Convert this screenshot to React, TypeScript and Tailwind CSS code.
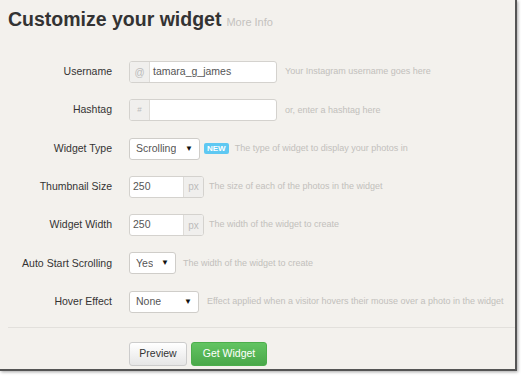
import { ReactNode } from 'react';

function Row({ label, children, help, helpGap = 'ml-2' }: { label: string; children: ReactNode; help: string; helpGap?: string }) {
  return (
    <div className="flex items-center h-[22px]">
      <div className="w-[112px] shrink-0 text-right text-[10.5px] text-[#333] whitespace-nowrap">{label}</div>
      <div className="ml-[17px] shrink-0 flex items-center">{children}</div>
      <div className={`${helpGap} text-[9px] text-[#c2c0bc] whitespace-nowrap`}>{help}</div>
    </div>
  );
}

function Select({ value, width }: { value: string; width: string }) {
  return (
    <div className={`${width} h-[22px] flex items-center justify-between bg-white border border-[#cfcdc9] rounded-[3px] pl-[6px] pr-[6px] text-[10.5px] text-[#555] overflow-hidden`}>
      <span className="whitespace-nowrap overflow-hidden">{value}</span>
      <span className="text-[8px] text-[#111] ml-1 shrink-0">▼</span>
    </div>
  );
}

function Addon({ children, side }: { children: ReactNode; side: 'left' | 'right' }) {
  return (
    <div
      className={`w-[20px] bg-[#f0efed] border-[#dedcd8] flex items-center justify-center text-[10px] text-[#bbb] ${
        side === 'left' ? 'border-r' : 'border-l'
      }`}
    >
      {children}
    </div>
  );
}

export default function App() {
  return (
    <div className="w-[521px] h-[379px] bg-white" style={{ fontFamily: '"Liberation Sans", Arial, sans-serif' }}>
      <div className="w-[517px] h-[371px] bg-[#f3f1ed] border-r-2 border-b-2 border-[#555] shadow-[1px_1px_3px_rgba(0,0,0,0.35)] flex flex-col">
        {/* Header */}
        <div className="px-[8px] pt-[5px] flex items-baseline h-[28px] leading-[28px]">
          <h1 className="text-[19.5px] font-bold text-[#333]">Customize your widget</h1>
          <span className="ml-[5px] text-[11px] text-[#c4c2be]">More Info</span>
        </div>

        {/* Form */}
        <div className="mt-[33px] flex flex-col gap-[16.3px]">
          <Row label="Username" help="Your Instagram username goes here">
            <div className="flex h-[22px] w-[148px] border border-[#d4d2ce] rounded-[3px] overflow-hidden bg-white">
              <Addon side="left">@</Addon>
              <div className="flex-1 flex items-center pl-[3px] text-[10.5px] text-[#555]">tamara_g_james</div>
            </div>
          </Row>
          <Row label="Hashtag" help="or, enter a hashtag here">
            <div className="flex h-[22px] w-[148px] border border-[#d4d2ce] rounded-[3px] overflow-hidden bg-white">
              <Addon side="left">
                <span className="text-[8px]">#</span>
              </Addon>
              <div className="flex-1" />
            </div>
          </Row>
          <Row label="Widget Type" help="The type of widget to display your photos in" helpGap="ml-[6px]">
            <Select value="Scrolling" width="w-[71px]" />
            <span className="ml-[4px] h-[11px] px-[3px] rounded-[2px] bg-[#5ec8f2] text-white text-[8px] font-bold leading-[11px]">NEW</span>
          </Row>
          <Row label="Thumbnail Size" help="The size of each of the photos in the widget" helpGap="ml-[5px]">
            <div className="flex h-[22px] w-[75px] border border-[#d4d2ce] rounded-[3px] overflow-hidden bg-white">
              <div className="flex-1 flex items-center pl-[3px] text-[10.5px] text-[#555]">250</div>
              <Addon side="right">px</Addon>
            </div>
          </Row>
          <Row label="Widget Width" help="The width of the widget to create" helpGap="ml-[5px]">
            <div className="flex h-[22px] w-[75px] border border-[#d4d2ce] rounded-[3px] overflow-hidden bg-white">
              <div className="flex-1 flex items-center pl-[3px] text-[10.5px] text-[#555]">250</div>
              <Addon side="right">px</Addon>
            </div>
          </Row>
          <Row label="Auto Start Scrolling" help="The width of the widget to create" helpGap="ml-[7px]">
            <Select value="Yes" width="w-[47px]" />
          </Row>
          <Row label="Hover Effect" help="Effect applied when a visitor hovers their mouse over a photo in the widget">
            <Select value="None" width="w-[70px]" />
          </Row>
        </div>

        <div className="ml-[8px] mt-[14px] h-px bg-[#e2e0dc]" />

        {/* Actions */}
        <div className="mt-[14px] ml-[129px] flex gap-[4px]">
          <button className="h-[24px] w-[58px] rounded-[3px] border border-[#ccc] bg-gradient-to-b from-white to-[#e6e6e6] text-[10.5px] text-[#333]">
            Preview
          </button>
          <button className="h-[24px] w-[76px] rounded-[3px] border border-[#4cae4c] bg-gradient-to-b from-[#62c462] to-[#4aa84a] text-[10.5px] text-white">
            Get Widget
          </button>
        </div>
      </div>
    </div>
  );
}
